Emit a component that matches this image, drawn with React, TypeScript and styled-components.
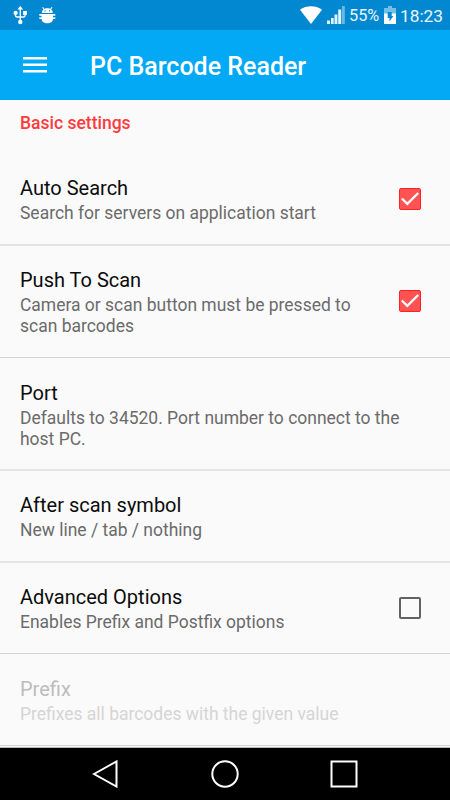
import React from 'react';
import styled, { createGlobalStyle } from 'styled-components';

const GlobalStyle = createGlobalStyle`
  * { box-sizing: border-box; }
  body { margin: 0; background: #fafafa; }
`;

const Screen = styled.div`
  width: 450px;
  height: 800px;
  display: flex;
  flex-direction: column;
  overflow: hidden;
  background: #fafafa;
  font-family: Roboto, sans-serif;
`;

const StatusBar = styled.header`
  height: 30px;
  flex: none;
  display: flex;
  align-items: center;
  justify-content: space-between;
  padding: 0 7px 0 13px;
  background: #0288d1;
  color: #e8f6ff;
`;

const StatusGroup = styled.div<{ $gap: number }>`
  display: flex;
  align-items: center;
  gap: ${(p) => p.$gap}px;
  svg { display: block; flex: none; }
`;

const StatusText = styled.span<{ $size: number; $width: number; $drop?: number }>`
  font-size: ${(p) => p.$size}px;
  line-height: 30px;
  width: ${(p) => p.$width}px;
  height: 30px;
  padding-top: ${(p) => p.$drop ?? 0}px;
  white-space: nowrap;
`;

const AppBar = styled.div`
  height: 70px;
  flex: none;
  display: flex;
  align-items: center;
  padding: 0 0 0 23px;
  gap: 43px;
  background: #03a9f4;
  svg { display: block; }
`;

const AppTitle = styled.h1`
  margin: 0;
  padding-top: 4px;
  font-size: 25px;
  font-weight: 500;
  line-height: 30px;
  color: #fff;
  white-space: nowrap;
`;

const Settings = styled.main`
  flex: 1;
  min-height: 0;
  overflow: hidden;
  border-bottom: 1px solid #b5b5b5;
`;

const SectionTitle = styled.h2`
  margin: 0;
  height: 53px;
  padding: 13px 20px 0;
  font-size: 17.5px;
  font-weight: 500;
  line-height: 21px;
  color: #ff3a3d;
`;

const Row = styled.section<{ $height: number; $soft?: boolean; $disabled?: boolean }>`
  height: ${(p) => p.$height}px;
  display: flex;
  align-items: center;
  justify-content: space-between;
  padding: 0 29px ${(p) => (p.$soft ? 0 : 1)}px 20px;
  border-bottom: ${(p) => (p.$soft ? '2px solid #e4e4e4' : '1px solid #d3d3d3')};
  color: ${(p) => (p.$disabled ? '#bcbcbc' : '#0c0c0c')};
`;

const RowText = styled.div<{ $top: number }>`
  align-self: flex-start;
  padding-top: ${(p) => p.$top}px;
`;

const RowTitle = styled.div`
  font-size: 20px;
  line-height: 25px;
`;

const Summary = styled.div<{ $disabled?: boolean }>`
  font-size: 17.48px;
  line-height: 20.5px;
  padding-top: 2px;
  white-space: pre-line;
  color: ${(p) => (p.$disabled ? '#d5d5d5' : '#6b6b6b')};
`;

const NavBar = styled.nav`
  height: 52px;
  flex: none;
  background: #000;
  display: flex;
  justify-content: center;
  gap: 91px;
  padding-top: 12px;
  padding-right: 1px;
`;

const UsbIcon = () => (
  <svg width="15" height="20" viewBox="0 0 15 20" fill="none" stroke="#fff" strokeWidth="1.4">
    <path d="M7.3 3v14M2.500 8.500v1.800q0 1.700 1.300 1.700h7q1.300 0 1.300-1.700V8" />
    <path d="M7.300 1 10.200 4.400H4.400z" fill="#fff" stroke="none" />
    <circle cx="2.600" cy="7.900" r="2.100" fill="#fff" stroke="none" />
    <path d="M10.100 6h3.800v4h-3.800z" fill="#fff" stroke="none" />
    <circle cx="7.300" cy="17" r="2.200" fill="#fff" stroke="none" />
  </svg>
);

const BugIcon = () => (
  <svg width="17" height="20" viewBox="0 0 17 20" fill="#fff">
    <path d="M2.900 8C2.900 5.200 5 3.200 8.300 3.200S13.700 5.200 13.700 8z" />
    <path d="M3.600 2.200 5.400 4.700M13 2.200l-1.800 2.500" stroke="#fff" strokeWidth="1.100" />
    <path d="M.3 9h16v1.700H.3zM2.600 9H14v4.700c0 3-2.500 4.500-5.700 4.500s-5.700-1.500-5.700-4.500z" />
    <path d="M.3 12.300h16v1.700H.3z" />
    <path d="M5.500 5.300h1.100v1.100H5.500zM10 5.300h1.100v1.100H10z" fill="#0288d1" />
  </svg>
);

const WifiIcon = () => (
  <svg width="22" height="18" viewBox="0 0 22 18" fill="#fff">
    <path d="M0 3.7C6.5-.8 15.500-.8 22 3.700L11 18z" />
  </svg>
);

const SignalIcon = () => (
  <svg width="18" height="18" viewBox="0 0 18 18" fill="#dff3ff">
    <path d="M0 14.500h3V18H0zM4 12h2.700v6H4zM7.500 8.500h2.900v9.500H7.500zM11.200 3.500h3V18h-3z" />
    <path d="M15 0h2.800v18H15z" fill="#6bbae5" />
  </svg>
);

const BatteryIcon = () => (
  <svg width="12" height="18" viewBox="0 0 12 18">
    <path d="M4 0h4v2h4v6H0V2h4z" fill="#75bfe7" />
    <path d="M0 7.500h12V18H0z" fill="#fff" />
    <path d="M3.700 6h4v4h1.600L5.500 15.500V12H3.700z" fill="#0288d1" />
  </svg>
);

const MenuIcon = () => (
  <svg width="24" height="18" viewBox="0 0 24 18" stroke="#fff" strokeWidth="2.500">
    <path d="M0 2.300h24M0 8.700h24M0 15.200h24" />
  </svg>
);

const Checkbox = ({ checked }: { checked: boolean }) => (
  <svg width="22" height="22" viewBox="0 0 22 22" fill="none" role="checkbox" aria-checked={checked}>
    {checked ? (
      <>
        <rect x=".5" y=".5" width="21" height="21" rx="1.500" fill="#ff5252" stroke="#ff2226" />
        <path d="m2.800 10.500 5.500 5.300L19.200 5" stroke="#fff" strokeWidth="2.300" />
      </>
    ) : (
      <rect x="1" y="1" width="20" height="20" rx="1" stroke="#626262" strokeWidth="2" />
    )}
  </svg>
);

type Setting = {
  title: string;
  summary: string;
  height: number;
  top: number;
  soft?: boolean;
  checked?: boolean;
  disabled?: boolean;
};

const settings: Setting[] = [
  { title: 'Auto Search', summary: 'Search for servers on application start', height: 93, top: 23, soft: true, checked: true },
  { title: 'Push To Scan', summary: 'Camera or scan button must be pressed to\nscan barcodes', height: 112, top: 22, checked: true },
  { title: 'Port', summary: 'Defaults to 34520. Port number to connect to the\nhost PC.', height: 113, top: 23, soft: true },
  { title: 'After scan symbol', summary: 'New line / tab / nothing', height: 92, top: 22, soft: true },
  { title: 'Advanced Options', summary: 'Enables Prefix and Postfix options', height: 91, top: 22, checked: false },
  { title: 'Prefix', summary: 'Prefixes all barcodes with the given value', height: 92, top: 23, disabled: true },
];

export default function App() {
  return (
    <Screen>
      <GlobalStyle />
      <StatusBar>
        <StatusGroup $gap={11}>
          <UsbIcon />
          <BugIcon />
        </StatusGroup>
        <StatusGroup $gap={4.5}>
          <WifiIcon />
          <SignalIcon />
          <StatusText $size={16.3} $width={30} $drop={1}>55%</StatusText>
          <BatteryIcon />
          <StatusText $size={17.3} $width={43} $drop={1}>18:23</StatusText>
        </StatusGroup>
      </StatusBar>
      <AppBar>
        <MenuIcon />
        <AppTitle>PC Barcode Reader</AppTitle>
      </AppBar>
      <Settings>
        <SectionTitle>Basic settings</SectionTitle>
        {settings.map((s) => (
          <Row key={s.title} $height={s.height} $soft={s.soft} $disabled={s.disabled}>
            <RowText $top={s.top}>
              <RowTitle>{s.title}</RowTitle>
              <Summary $disabled={s.disabled}>{s.summary}</Summary>
            </RowText>
            {s.checked !== undefined && <Checkbox checked={s.checked} />}
          </Row>
        ))}
      </Settings>
      <NavBar>
        <svg width="28" height="28" viewBox="0 0 28 28" fill="none" stroke="#fff" strokeWidth="2">
          <path d="M2 14 24.500 1.500v25z" />
        </svg>
        <svg width="28" height="28" viewBox="0 0 28 28" fill="none" stroke="#fff" strokeWidth="2">
          <circle cx="14" cy="14" r="12.700" />
        </svg>
        <svg width="28" height="28" viewBox="0 0 28 28" fill="none" stroke="#fff" strokeWidth="2">
          <path d="M1.500 1.500h25v25h-25z" />
        </svg>
      </NavBar>
    </Screen>
  );
}
